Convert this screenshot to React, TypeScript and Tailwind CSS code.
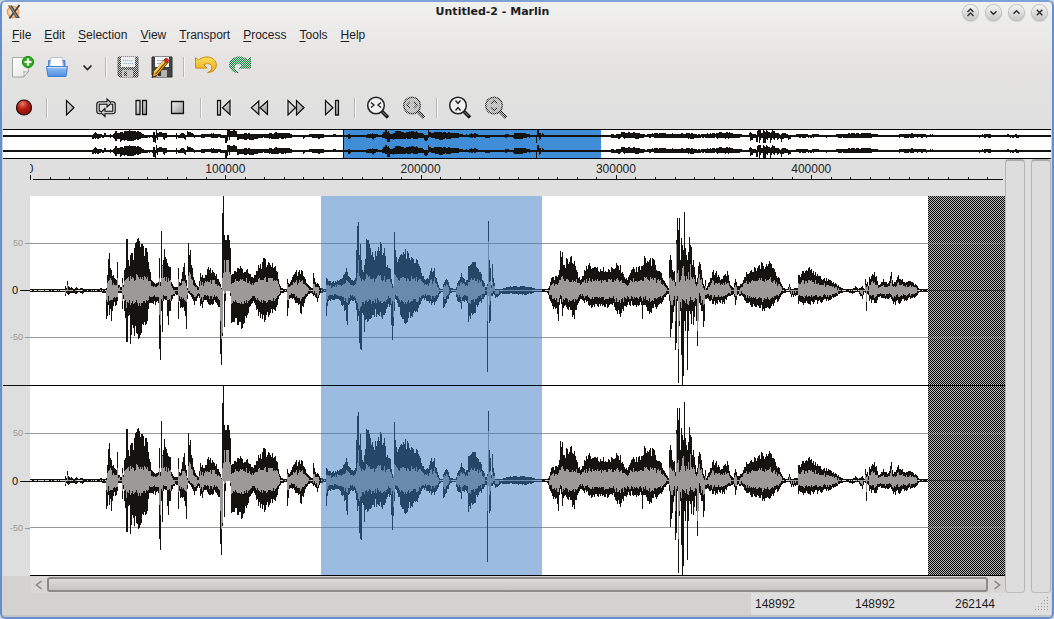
import React from "react";

/* ---------- audio data ---------- */

// [column, peak above zero, peak below zero], 512 samples per column
const ENVELOPE: number[][] = [
  [30, 1, 1], [64, 1, 1], [65, 4, 5], [66, 2, 2], [67, 9, 3], [68, 4, 4], [70, 2, 2], [71, 3, 2], [73, 1, 2], [76, 3, 3], [78, 1, 1], [82, 2, 3], [84, 1, 1], [98, 1, 1], [100, 2, 1],
  [105, 1, 2], [106, 2, 28], [107, 15, 25], [108, 31, 14], [109, 37, 24], [110, 22, 18], [111, 20, 30], [113, 15, 15], [116, 10, 14], [117, 28, 10],
  [118, 5, 2], [121, 3, 2], [122, 12, 18], [123, 5, 8], [124, 20, 20], [125, 22, 27], [126, 51, 51], [127, 51, 51], [128, 30, 25], [129, 24, 24],
  [130, 35, 53], [132, 37, 34], [134, 42, 45], [136, 48, 42], [137, 51, 43], [139, 49, 47], [141, 46, 42], [143, 44, 34], [145, 42, 34], [147, 38, 30],
  [148, 28, 18], [150, 18, 12], [152, 9, 12], [155, 6, 14], [157, 7, 10], [158, 8, 12], [159, 32, 58], [160, 8, 69], [161, 59, 20], [162, 25, 41],
  [163, 30, 10], [164, 41, 8], [166, 31, 9], [167, 27, 25], [168, 24, 34], [170, 23, 20], [171, 8, 10], [173, 4, 5], [177, 3, 4], [178, 22, 28],
  [179, 8, 10], [180, 7, 17], [182, 18, 17], [184, 27, 20], [186, 10, 38], [187, 2, 8], [188, 47, 2], [190, 40, 4], [192, 22, 8], [194, 10, 14],
  [196, 5, 10], [198, 3, 5], [200, 17, 15], [202, 15, 17], [204, 12, 9], [207, 21, 11], [210, 22, 14], [213, 18, 13], [216, 16, 12], [219, 8, 16],
  [220, 6, 63], [221, 2, 74], [222, 77, 45], [223, 94, 0], [224, 55, 36], [225, 50, 10], [226, 50, 0], [227, 55, 0], [229, 50, 0], [230, 42, 5],
  [231, 15, 32], [234, 19, 31], [237, 22, 34], [240, 24, 31], [242, 21, 37], [246, 20, 27], [250, 16, 15], [253, 12, 10], [255, 15, 14],
  [258, 25, 25], [262, 28, 28], [265, 31, 29], [268, 28, 26], [272, 27, 22], [275, 24, 20], [277, 18, 14], [279, 6, 5], [281, 2, 2], [286, 1, 1],
  [287, 11, 25], [289, 6, 8], [292, 13, 8], [295, 18, 12], [298, 18, 14], [301, 20, 23], [304, 13, 12], [307, 6, 5], [311, 2, 2], [312, 2, 3],
  [313, 17, 5], [315, 8, 6], [317, 7, 11], [320, 2, 2], [325, 1, 1], [326, 12, 25], [328, 9, 10], [332, 8, 9], [338, 9, 8], [342, 12, 15],
  [344, 16, 20], [346, 22, 30], [347, 18, 34], [348, 14, 14], [352, 10, 10], [355, 12, 12], [357, 64, 30], [358, 68, 25], [359, 35, 52],
  [360, 46, 58], [361, 30, 59], [362, 20, 22], [364, 25, 41], [366, 51, 28], [367, 50, 31], [370, 42, 28], [373, 33, 24], [377, 39, 23],
  [381, 46, 26], [384, 42, 24], [386, 23, 18], [390, 21, 14], [392, 6, 49], [393, 4, 35], [394, 58, 20], [395, 40, 8], [397, 28, 12],
  [400, 35, 24], [403, 38, 28], [405, 41, 33], [408, 37, 27], [411, 33, 25], [414, 27, 20], [417, 30, 21], [420, 22, 13], [424, 11, 9],
  [428, 11, 10], [431, 22, 14], [434, 22, 14], [437, 8, 8], [439, 2, 3], [442, 1, 1], [443, 6, 17], [446, 11, 12], [448, 8, 8], [450, 2, 2],
  [455, 1, 1], [457, 7, 10], [461, 17, 18], [463, 12, 10], [465, 8, 9], [467, 10, 12], [468, 24, 31], [471, 26, 22], [474, 28, 22],
  [478, 21, 14], [481, 16, 12], [485, 3, 4], [486, 3, 4], [487, 6, 81], [488, 69, 5], [489, 30, 32], [490, 22, 30], [491, 5, 5], [492, 26, 5], [493, 12, 3],
  [495, 1, 7], [497, 1, 6], [500, 1, 3], [507, 3, 3], [515, 4, 3], [522, 4, 4], [530, 3, 3], [536, 1, 1], [546, 1, 1], [548, 2, 4], [550, 8, 10],
  [552, 13, 15], [555, 14, 18], [558, 15, 30], [559, 20, 14], [560, 39, 8], [562, 38, 25], [564, 25, 15], [567, 31, 18], [570, 33, 19], [574, 29, 28],
  [577, 18, 14], [580, 10, 8], [584, 20, 12], [588, 25, 14], [592, 22, 16], [600, 21, 15], [608, 21, 16], [614, 21, 16], [616, 27, 20],
  [620, 25, 26], [623, 16, 20], [627, 10, 14], [632, 21, 14], [638, 23, 15], [641, 24, 14], [642, 24, 28], [643, 25, 14], [644, 34, 14], [647, 29, 20],
  [650, 32, 21], [653, 31, 17], [657, 19, 16], [661, 17, 13], [665, 7, 6], [668, 2, 3], [669, 30, 10], [670, 35, 46], [672, 20, 32], [674, 19, 15],
  [675, 8, 59], [676, 50, 52], [677, 72, 10], [678, 60, 92], [679, 72, 35], [680, 30, 20], [681, 52, 64], [682, 45, 94], [683, 40, 85], [684, 78, 30],
  [685, 42, 40], [686, 35, 20], [687, 30, 79], [688, 38, 40], [689, 53, 20], [691, 43, 33], [692, 25, 20], [693, 30, 34], [695, 15, 15], [696, 8, 30], [697, 12, 55],
  [698, 24, 30], [699, 28, 12], [701, 20, 20], [702, 12, 20], [703, 6, 36], [704, 4, 30], [705, 10, 8], [706, 2, 8], [709, 8, 10], [712, 18, 13],
  [716, 19, 12], [720, 10, 12], [724, 15, 13], [727, 19, 6], [730, 5, 5], [733, 2, 3], [735, 11, 14], [737, 4, 4], [742, 7, 5], [746, 18, 12],
  [750, 19, 14], [755, 22, 16], [759, 25, 17], [762, 27, 20], [766, 26, 17], [770, 27, 17], [774, 21, 12], [779, 12, 8], [783, 2, 2], [787, 1, 1],
  [789, 6, 1], [791, 1, 6], [797, 2, 4], [798, 15, 13], [802, 19, 12], [808, 22, 13], [813, 19, 13], [820, 14, 11], [828, 11, 10], [835, 7, 6],
  [841, 2, 2], [848, 1, 1], [852, 1, 3], [855, 4, 1], [858, 1, 1], [862, 4, 8], [864, 1, 1], [865, 11, 2], [866, 6, 20], [867, 8, 3], [868, 4, 4], [869, 13, 10],
  [874, 18, 12], [876, 14, 12], [878, 5, 6], [883, 11, 7], [888, 7, 8], [891, 18, 8], [893, 6, 13], [898, 15, 12], [904, 8, 10], [910, 9, 8], [915, 6, 6],
  [919, 1, 1], [927, 1, 1],
];

// Columns whose average level departs from the usual share of the peak
const AVERAGE: Record<number, [number, number]> = {
  159: [12, 24], 160: [4, 34], 162: [24, 10], 189: [18, 0], 190: [16, 2], 220: [3, 30], 221: [1, 48], 222: [12, 42], 224: [30, 3], 225: [18, 2],
  226: [30, 0], 227: [30, 0], 228: [30, 0], 229: [18, 0], 230: [16, 2], 358: [30, 18], 359: [14, 20], 393: [4, 26],
  487: [4, 30], 488: [49, 5], 489: [8, 14], 675: [4, 30], 676: [46, 8], 678: [20, 58], 679: [8, 30], 682: [22, 8],
  683: [24, 9], 684: [14, 10], 688: [18, 14], 690: [26, 6], 697: [6, 40], 698: [12, 30], 699: [16, 2],
};

const COLUMNS = 898;
const MID = 94;

const noise = (n: number) => {
  const v = Math.sin(n * 12.9898) * 43758.5453;
  return v - Math.floor(v);
};

type Column = { up: number; down: number; avgUp: number; avgDown: number };

const average = (peak: number, n: number) =>
  peak <= 4 ? 0 : Math.min(peak, Math.round(Math.min(peak * 0.48, 7 + peak * 0.13) * (0.72 + 0.5 * noise(n))));

const samples: Column[] = (() => {
  const out: Column[] = [];
  let k = 0;
  for (let i = 0; i < COLUMNS; i++) {
    const x = i + 30;
    while (k < ENVELOPE.length - 2 && ENVELOPE[k + 1][0] <= x) k++;
    const [x0, u0, d0] = ENVELOPE[k];
    const [x1, u1, d1] = ENVELOPE[k + 1];
    const t = Math.min(1, (x - x0) / (x1 - x0));
    const exact = x === x0;
    const up = Math.round((u0 + (u1 - u0) * t) * (exact ? 1 : 0.76 + 0.34 * noise(x)));
    const down = Math.round((d0 + (d1 - d0) * t) * (exact ? 1 : 0.74 + 0.38 * noise(x + 700)));
    const given = AVERAGE[x];
    out.push({
      up,
      down,
      avgUp: given ? given[0] : average(up, x + 50),
      avgDown: given ? given[1] : average(down, x + 90),
    });
  }
  return out;
})();

const bar = (x: number, top: number, bottom: number) => `M${x} ${top}h1V${bottom}h-1z`;

const peakPath = samples.map((s, i) => bar(i, MID - s.up, MID + 1 + s.down)).join("");
const averagePath = samples
  .map((s, i) => (s.up + s.down > 4 ? bar(i, MID - s.avgUp, MID + 1 + s.avgDown) : ""))
  .join("");
const quietPath = samples
  .map((s, i) => (s.up + s.down <= 4 && noise(i + 5) > 0.35 ? bar(i, MID, MID + 1) : ""))
  .join("");

const overviewPath = (mid: number) => {
  let d = "";
  for (let x = 0; x < 1048; x++) {
    const s = samples[Math.min(COLUMNS - 1, Math.round(x / 1.167))];
    const up = Math.min(6, Math.round(s.up * 0.1 + 0.3));
    const down = Math.min(7, Math.round(s.down * 0.1 + 0.3));
    d += bar(x, mid - Math.max(1, up), mid + Math.max(1, down));
  }
  return d;
};

/* ---------- icons ---------- */

const Dither = ({ id }: { id: string }) => (
  <defs>
    <pattern id={`${id}-dots`} width="2" height="2" patternUnits="userSpaceOnUse">
      <path d="M0 0h1v1H0zM1 1h1v1H1z" fill="#fff" shapeRendering="crispEdges" />
      <path d="M1 0h1v1H1zM0 1h1v1H0z" fill="#2a2a2a" shapeRendering="crispEdges" />
    </pattern>
    <mask id={id} maskUnits="userSpaceOnUse" x="0" y="0" width="24" height="24">
      <rect width="24" height="24" fill={`url(#${id}-dots)`} />
    </mask>
  </defs>
);

const Icon = ({ children }: { children: React.ReactNode }) => (
  <svg className="size-6" viewBox="0 0 24 24" fill="none" aria-hidden="true">
    {children}
  </svg>
);

const NewIcon = () => (
  <Icon>
    <defs>
      <linearGradient id="sheet" x1="0" y1="0" x2="1" y2="1">
        <stop offset="0" stopColor="#fff" />
        <stop offset="1" stopColor="#e6e8e4" />
      </linearGradient>
    </defs>
    <path d="M1.5 2.5h16v14l-5 5.500h-11z" fill="url(#sheet)" stroke="#a5a8a2" />
    <path d="M12.500 22c.8-1.500.8-3.500.2-5.500 1.800.8 3.500.8 4.800 0z" fill="#f8f8f8" stroke="#999c96" strokeWidth=".8" />
    <circle cx="17" cy="7" r="5.600" fill="#2fae20" stroke="#178a0c" />
    <path d="M17 3.500v7M13.500 7h7" stroke="#fff" strokeWidth="2.200" />
  </Icon>
);

const OpenIcon = () => (
  <Icon>
    <defs>
      <linearGradient id="folder" x1="0" y1="0" x2="0" y2="1">
        <stop offset="0" stopColor="#9cc4f5" />
        <stop offset="1" stopColor="#4a8de0" />
      </linearGradient>
    </defs>
    <path d="M3.500 12V5.500h3L7.500 4h9v1.500H20V12z" fill="#5d9be6" stroke="#3c78c4" strokeWidth=".8" />
    <path d="M6 2.500h11l1.500 9.500h-14z" fill="#fdfdfd" stroke="#a9b4c4" strokeWidth=".8" />
    <path d="M1.500 11.500h21l-1.500 10H3z" fill="url(#folder)" stroke="#3f7fd0" />
    <path d="M2.500 12.500h19" stroke="#cfe2fb" />
  </Icon>
);

const ChevronIcon = () => (
  <Icon>
    <path d="M7.500 10.500l4 4 4-4" stroke="#222" strokeWidth="1.600" />
  </Icon>
);

const Floppy = () => (
  <>
    <path d="M2 2h20v20H4l-2-2z" fill="#444" stroke="#2a2a2a" />
    <path d="M5 2h14v10H5z" fill="#f4f6fa" />
    <path d="M7 5.500h10M7 8.500h10" stroke="#9fb2d0" />
    <path d="M6 15h11v7H6z" fill="#b4b4b4" />
    <path d="M8 16.500h3V21H8z" fill="#333" />
  </>
);

const SaveIcon = () => (
  <Icon>
    <Dither id="save-dither" />
    <g mask="url(#save-dither)"><Floppy /></g>
  </Icon>
);

const SaveAsIcon = () => (
  <Icon>
    <Floppy />
    <path d="M2 22.500l1.500-5L15 4l3.500 3L7 20.500z" fill="#f0a818" stroke="#3a2a08" strokeWidth=".9" />
    <path d="M4 17.500L15 5" stroke="#ffd95c" strokeWidth="1.200" />
    <path d="M5.700 19L16.800 6" stroke="#3a2a08" strokeWidth="1" />
    <path d="M13.800 5.300L15.500 3.300c1-.8 3.700 1.400 3 2.600l-1.700 2z" fill="#e02818" stroke="#7c1008" strokeWidth=".6" />
    <path d="M1.800 23l.8-2.600 1.500 1.400z" fill="#222" />
  </Icon>
);

const ArrowShape = ({ fill, stroke }: { fill: string; stroke: string }) => (
  <path
    d="M1.500 2.500l3.200 2.700C7.500 2.300 12 1.200 16 2.400c4.500 1.400 6.800 4.800 6.300 8.600-.6 3.900-4 6.400-8.800 6.600 3-1.400 4.800-3.500 4.300-6-.5-2.600-4.600-4.200-8-1.800l3.300 3.300H1.500z"
    fill={fill}
    stroke={stroke}
    strokeLinejoin="round"
  />
);

const UndoIcon = () => (
  <Icon>
    <defs>
      <linearGradient id="gold" x1="0" y1="0" x2="0" y2="1">
        <stop offset="0" stopColor="#fbe05a" />
        <stop offset="1" stopColor="#eba51c" />
      </linearGradient>
    </defs>
    <ArrowShape fill="url(#gold)" stroke="#c98a14" />
  </Icon>
);

const RedoIcon = () => (
  <Icon>
    <Dither id="redo-dither" />
    <g mask="url(#redo-dither)">
      <g transform="translate(24 0) scale(-1 1)"><ArrowShape fill="#169048" stroke="#0a6c34" /></g>
    </g>
  </Icon>
);

const RecordIcon = () => (
  <Icon>
    <defs>
      <radialGradient id="rec" cx=".4" cy=".25" r=".8">
        <stop offset="0" stopColor="#e8786c" />
        <stop offset=".45" stopColor="#b81d12" />
        <stop offset="1" stopColor="#8a0d08" />
      </radialGradient>
    </defs>
    <circle cx="12" cy="11.500" r="7.500" fill="url(#rec)" stroke="#1a0a0a" strokeWidth="1.200" />
  </Icon>
);

const Steel = ({ id, d }: { id: string; d: string }) => (
  <Icon>
    <defs>
      <linearGradient id={id} x1="0" y1="0" x2="1" y2="1">
        <stop offset="0" stopColor="#f2f2f2" />
        <stop offset="1" stopColor="#989898" />
      </linearGradient>
    </defs>
    <path d={d} stroke="#fff" strokeWidth="3" opacity=".5" />
    <path d={d} fill={`url(#${id})`} stroke="#111" strokeWidth="1.300" />
  </Icon>
);

const LoopIcon = () => (
  <Icon>
    <path d="M7 16.500H5.500a1.500 1.500 0 0 1-1.500-1.500V8.500a1.500 1.500 0 0 1 1.500-1.500H15M17 7h1.500a1.500 1.500 0 0 1 1.500 1.500V15a1.500 1.500 0 0 1-1.500 1.500H9" stroke="#111" strokeWidth="3.600" />
    <path d="M13 3l4.500 4L13 11zM11 12.500l-4.500 4 4.500 4z" fill="#ccc" stroke="#111" strokeWidth="1.100" />
    <path d="M7 16.500H5.500a1.500 1.500 0 0 1-1.500-1.500V8.500a1.500 1.500 0 0 1 1.500-1.500H15M17 7h1.500a1.500 1.500 0 0 1 1.500 1.500V15a1.500 1.500 0 0 1-1.500 1.500H9" stroke="#c8c8c8" strokeWidth="1.500" />
  </Icon>
);

const Glass = ({ mark, dim }: { mark: string; dim?: string }) => (
  <Icon>
    {dim && <Dither id={dim} />}
    <g mask={dim ? `url(#${dim})` : undefined}>
      <circle cx="10" cy="9.500" r="8.300" fill={dim ? "#b0b0b0" : "#f1f1f1"} stroke="#222" strokeWidth="1.500" />
      <path d="M16 15.500l6 6" stroke="#1a1a1a" strokeWidth="3.600" />
      <path d="M16.600 16l4 4" stroke="#999" strokeWidth=".8" />
      <path d={mark} stroke="#222" strokeWidth="1.400" />
    </g>
  </Icon>
);

const LogoIcon = () => (
  <svg className="size-4" viewBox="0 0 16 16" fill="none" aria-hidden="true">
    <circle cx="7" cy="8" r="5.500" stroke="#f08a24" strokeWidth="1.600" opacity=".8" />
    <circle cx="7" cy="8" r="4" fill="#f6c9a0" opacity=".6" />
    <path d="M2 1.500h4L14 14h-4z" fill="#55504c" />
    <path d="M13.500 1L3.500 14.500" stroke="#4a4644" strokeWidth="2" />
    <path d="M4 2l7 11" stroke="#b5b0aa" strokeWidth=".8" />
  </svg>
);

/* ---------- chrome ---------- */

const windowButtons = [
  { label: "Keep above", d: "M4.500 7l3-3 3 3M4.500 11l3-3 3 3" },
  { label: "Minimize", d: "M4.500 6.300l3 3 3-3" },
  { label: "Maximize", d: "M4.500 8.800l3-3 3 3" },
  { label: "Close", d: "M4.800 4.800l5.500 5.500M10.300 4.800l-5.500 5.500" },
];

const TitleBar = () => (
  <header className="flex h-5 items-center pl-1 pr-[5px]">
    <LogoIcon />
    <h1 className="flex-1 text-center font-['DejaVu_Sans',sans-serif] text-[11px] font-bold">Untitled-2 - Marlin</h1>
    <div className="flex gap-2">
      {windowButtons.map((b) => (
        <button
          key={b.label}
          aria-label={b.label}
          className="size-[15px] rounded-full bg-linear-to-b from-[#f4f4f4] to-[#c9c9c9] shadow-[0_0_0_1px_#c0c0c0,0_1px_2px_#999]"
        >
          <svg viewBox="0 0 15 15" fill="none" className="size-[15px]" aria-hidden="true">
            <path d={b.d} stroke="#2c2c2c" strokeWidth="1.400" />
          </svg>
        </button>
      ))}
    </div>
  </header>
);

const menus = ["File", "Edit", "Selection", "View", "Transport", "Process", "Tools", "Help"];

const MenuBar = () => (
  <nav aria-label="Menu" className="flex h-[25px] items-center gap-[13px] pl-2.5 text-[12px]">
    {menus.map((m) => (
      <button key={m}>
        <span className="underline underline-offset-2">{m[0]}</span>
        {m.slice(1)}
      </button>
    ))}
  </nav>
);

const Separator = () => (
  <div className="flex w-2.5 justify-center">
    <div className="h-5 w-0.5 border-l border-[#b9b9b9] bg-[#f6f6f6]" />
  </div>
);

const FileTool = ({ label, children }: { label: string; children: React.ReactNode }) => (
  <button aria-label={label} className="flex h-8 w-[34px] items-center justify-center">{children}</button>
);

const PlayTool = ({ label, children }: { label: string; children: React.ReactNode }) => (
  <button aria-label={label} className="flex h-8 w-9 items-center justify-center">{children}</button>
);

const FileToolbar = () => (
  <div role="toolbar" aria-label="File" className="flex h-10 items-center pl-1">
    <FileTool label="New"><NewIcon /></FileTool>
    <FileTool label="Open"><OpenIcon /></FileTool>
    <button aria-label="Recent files" className="flex h-8 w-[27px] items-center justify-center"><ChevronIcon /></button>
    <Separator />
    <FileTool label="Save"><SaveIcon /></FileTool>
    <FileTool label="Save as"><SaveAsIcon /></FileTool>
    <Separator />
    <FileTool label="Undo"><UndoIcon /></FileTool>
    <FileTool label="Redo"><RedoIcon /></FileTool>
  </div>
);

const TransportToolbar = () => (
  <div role="toolbar" aria-label="Transport" className="flex h-[42px] items-center pl-1">
    <PlayTool label="Record"><RecordIcon /></PlayTool>
    <Separator />
    <PlayTool label="Play"><Steel id="play" d="M8.500 4.500v14.500l7.500-7.200z" /></PlayTool>
    <PlayTool label="Loop"><LoopIcon /></PlayTool>
    <PlayTool label="Pause"><Steel id="pause" d="M6 4.500h4v14H6zM12.500 4.500h4v14h-4z" /></PlayTool>
    <PlayTool label="Stop"><Steel id="stop" d="M5.500 5.500h12v12h-12z" /></PlayTool>
    <Separator />
    <PlayTool label="Previous"><Steel id="prev" d="M5.500 4.500h3v14.500h-3zM18 4.500v14.200l-7.500-7z" /></PlayTool>
    <PlayTool label="Rewind"><Steel id="rewind" d="M10.800 5v13.500l-7.500-6.700zM19.500 5v13.500l-7.500-6.700z" /></PlayTool>
    <PlayTool label="Forward"><Steel id="forward" d="M4 4.500v14.500l7.500-7.200zM12.500 4.500v14.500l7.500-7.200z" /></PlayTool>
    <PlayTool label="Next"><Steel id="next" d="M5.500 4.500v14.200l7.500-7zM15.500 4.500h3v14.500h-3z" /></PlayTool>
    <Separator />
    <PlayTool label="Zoom in"><Glass mark="M5 6.500l3 2.500-3 2.500M15 6.500L12 9l3 2.500" /></PlayTool>
    <PlayTool label="Zoom out"><Glass dim="hz-dither" mark="M8 6L5 9l3 3M12 6l3 3-3 3" /></PlayTool>
    <Separator />
    <PlayTool label="Zoom in vertically"><Glass mark="M7.500 4.500L10 7.500l2.500-3M7.500 14.500l2.500-3 2.500 3" /></PlayTool>
    <PlayTool label="Zoom out vertically"><Glass dim="vt-dither" mark="M7 7.500l3-3 3 3M7 11.500l3 3 3-3" /></PlayTool>
  </div>
);

/* ---------- sample display ---------- */

const Overview = () => (
  <div className="h-[30px] border-y border-black bg-white">
    <svg className="block h-7 w-full" viewBox="0 0 1048 28" preserveAspectRatio="none" shapeRendering="crispEdges" aria-label="Overview">
      <rect x="340" width="258" height="28" fill="#3f8dd6" />
      <rect x="340" width="1" height="28" fill="#111" />
      <path d={overviewPath(6) + overviewPath(21)} fill="#14130f" />
    </svg>
  </div>
);

const VISIBLE_SAMPLES = 499200;
const ticks = Array.from({ length: 50 }, (_, i) => i * 10000);

const Ruler = () => (
  <svg className="ml-[27px] block h-[37px] w-[calc(100%-27px)] overflow-hidden bg-[#dfdfdf]" shapeRendering="crispEdges" aria-label="Ruler">
    <line x1="3" x2="99.800%" y1="20.500" y2="20.500" stroke="#111" />
    {ticks.map((t) => {
      const x = `${(t / VISIBLE_SAMPLES) * 100}%`;
      const major = t % 100000 === 0;
      return <rect key={t} x={x} y={major ? 16 : 18} width="1" height={major ? 5 : 2} fill="#111" />;
    })}
    {ticks.filter((t) => t % 100000 === 0).map((t) => (
      <text key={t} x={`${(t / VISIBLE_SAMPLES) * 100}%`} y="14" textAnchor="middle" fontSize="12" fill="#222">{t}</text>
    ))}
  </svg>
);

const Channel = ({ id, last }: { id: string; last?: boolean }) => (
  <div className="flex min-h-[190px] flex-1">
    <div className={`grid w-[27px] shrink-0 grid-rows-[1fr_2fr_2fr_2fr_1fr] bg-[#dedede] ${last ? "" : "border-b border-[#111]"}`}>
      <div />
      <div className="flex items-center justify-end gap-0.5 text-[9px] leading-none text-[#999]">
        50<span className="h-px w-[5px] bg-[#999]" />
      </div>
      <div className="flex items-center justify-end gap-0.5 text-[11px] leading-none text-[#111]">
        0<span className="h-px w-2.5 bg-[#111]" />
      </div>
      <div className="flex items-center justify-end gap-0.5 text-[9px] leading-none text-[#999]">
        -50<span className="h-px w-[5px] bg-[#999]" />
      </div>
      <div />
    </div>
    <div className="min-w-0 flex-1">
      <svg className="block h-full w-full" viewBox="0 0 975 190" preserveAspectRatio="none" shapeRendering="crispEdges" aria-label="Waveform">
        <defs>
          <pattern id={id} width="2" height="2" patternUnits="userSpaceOnUse">
            <rect width="2" height="2" fill="#bdbdbd" />
            <path d="M0 0h1v1H0zM1 1h1v1H1z" fill="#000" />
          </pattern>
        </defs>
        <rect width="898" height="190" fill="#fff" />
        <path d="M0 47h898v1H0zM0 141h898v1H0z" fill="#999" />
        <path d={peakPath} fill="#14130f" />
        <path d={averagePath} fill="#9b9a98" />
        <path d={quietPath} fill="#d8d8d4" />
        <rect x="898" width="77" height="190" fill={`url(#${id})`} />
        <path d="M898 47h77v1h-77zM898 141h77v1h-77z" fill="#999" opacity=".5" />
        <path d="M898 94h77v1h-77z" fill="#111" opacity=".6" />
        <rect x="291" width="221" height="190" fill="#3779c1" opacity=".5" />
        <rect y="189" width="975" height="1" fill="#000" />
      </svg>
    </div>
  </div>
);

const ScrollArrow = ({ label, d }: { label: string; d: string }) => (
  <button aria-label={label} className="flex w-[17px] items-center justify-center">
    <svg className="size-2.5" viewBox="0 0 10 10" fill="none" aria-hidden="true">
      <path d={d} stroke="#888" strokeWidth="1.600" />
    </svg>
  </button>
);

const ScrollBar = () => (
  <div role="scrollbar" aria-controls="tracks" aria-valuenow={0} aria-label="Position" className="ml-[27px] flex h-[17px] bg-[#d8d7d5] pt-px">
    <ScrollArrow label="Scroll left" d="M7.500 1L2.500 5l5 4" />
    <div className="h-[15px] flex-1 rounded-[3px] border-2 border-[#8b8b89] bg-linear-to-b from-[#dcdbd9] to-[#c6c5c3]" />
    <ScrollArrow label="Scroll right" d="M2.500 1l5 4-5 4" />
  </div>
);

const Slot = ({ className }: { className: string }) => (
  <div className={`rounded-[4px] border border-t-2 border-t-[#a9a9a9] border-x-[#b4b4b4] border-b-[#bcbcbc] bg-[#dddddd] ${className}`} />
);

const gripDots = [0, 1, 2, 3, 4].flatMap((r) => Array.from({ length: r + 1 }, (_, c) => [12 - c * 3, r * 3]));

const StatusBar = () => (
  <footer className="flex h-[22px] justify-end text-[12px]">
    <div className="flex items-center bg-[#dfdfdf]">
      <div className="w-[100px] pl-1">148992</div>
      <div className="w-[100px] pl-1">148992</div>
      <div className="flex w-[100px] items-center justify-between pl-1 pr-0.5">
        262144
        <svg className="size-3.5" viewBox="0 0 14 14" aria-hidden="true">
          {gripDots.map(([x, y]) => (
            <rect key={`${x}-${y}`} x={x} y={y} width="1" height="1" fill="#999" />
          ))}
        </svg>
      </div>
    </div>
  </footer>
);

export default function App() {
  return (
    <div className="bg-[#c9d3e4]">
      <div className="flex min-h-screen flex-col overflow-hidden rounded-md border-2 border-[#6590cb] border-t-[#7ea2d6] bg-[#d3d2d1] font-['Liberation_Sans',Arial,sans-serif] text-[#1c1c1c]">
        <div className="bg-linear-to-b from-[#f1f1f0] via-[#e4e3e2] to-[#dfdfdf]">
          <TitleBar />
          <MenuBar />
          <FileToolbar />
          <TransportToolbar />
        </div>
        <div className="flex flex-1 flex-col px-px">
          <Overview />
          <main className="flex flex-1 bg-[#dfdfdf]">
            <div className="flex min-w-0 flex-1 flex-col">
              <Ruler />
              <div id="tracks" className="flex flex-1 flex-col">
                <Channel id="void-left" />
                <Channel id="void-right" last />
              </div>
              <div className="bg-[#d3d2d1]">
                <ScrollBar />
              </div>
            </div>
            <Slot className="w-5" />
            <Slot className="ml-1.5 w-5" />
          </main>
          <StatusBar />
        </div>
        <div className="h-0.5 bg-[#c2c3c4]" />
      </div>
    </div>
  );
}
